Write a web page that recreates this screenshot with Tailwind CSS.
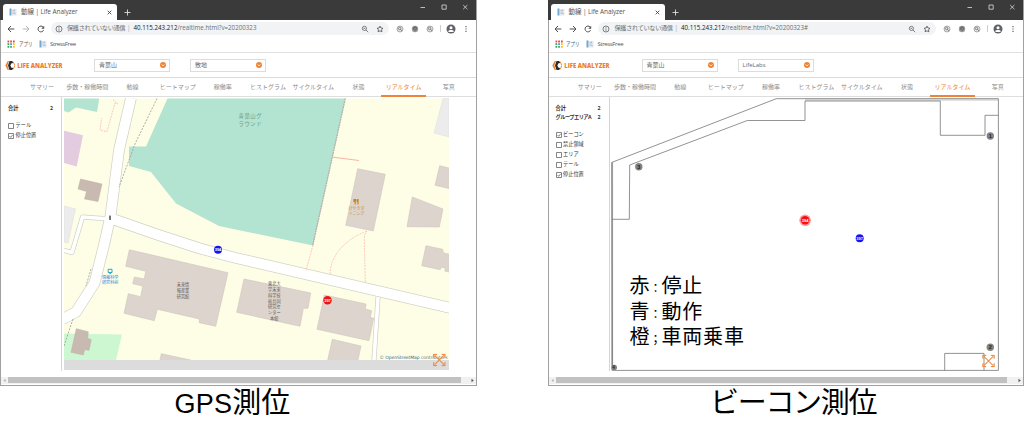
<!DOCTYPE html>
<html lang="ja">
<head>
<meta charset="utf-8">
<title>Life Analyzer</title>
<script src="https://cdn.jsdelivr.net/npm/@tailwindcss/browser@4"></script>
</head>
<body class="bg-white overflow-hidden font-['Open_Sans','Noto_Sans_CJK_JP',sans-serif]">
<svg class="hidden">
  <defs>
    <symbol id="favicon" viewBox="0 0 8 8"><rect x=".5" y=".5" width="2" height="7" fill="#6fa8cf"/><rect x="3" y="1" width="4.5" height="6.5" fill="#e3e8ee"/><path d="M3.5 2.5h2M3.5 4h2.5M3.5 5.5h3.5M5.5 1v2" stroke="#b3bfca" stroke-width=".7"/></symbol>
    <symbol id="apps" viewBox="0 0 8 8"><path d="M.5 1.5h1.7" stroke="#ea4335" stroke-width="1.8"/><path d="M3.2 1.5h1.7M6 1.5h1.7" stroke="#ea4335" stroke-width="1.8"/><path d="M.5 4.1h1.7" stroke="#34a853" stroke-width="1.8"/><path d="M3.2 4.1h1.7" stroke="#4285f4" stroke-width="1.8"/><path d="M6 4.1h1.7M6 6.8h1.7" stroke="#fbbc05" stroke-width="1.8"/><path d="M.5 6.8h1.7M3.2 6.8h1.7" stroke="#34a853" stroke-width="1.8"/></symbol>
    <symbol id="arrow" viewBox="0 0 8 8"><path d="M7.3 4H1.2M4 1L1 4l3 3" fill="none" stroke="currentColor" stroke-width="1"/></symbol>
    <symbol id="reload" viewBox="0 0 8 8"><path d="M6.6 5.2A2.9 2.9 0 1 1 6.2 2.1" fill="none" stroke="currentColor" stroke-width="1"/><path d="M7.2.8v2.9H4.3z" fill="currentColor"/></symbol>
    <symbol id="info" viewBox="0 0 8 8"><circle cx="4" cy="4" r="3" fill="none" stroke="#5f6368" stroke-width=".8"/><path d="M4 3.6v2.1M4 2.2v.8" stroke="#5f6368" stroke-width=".8"/></symbol>
    <symbol id="lens" viewBox="0 0 8 8"><circle cx="3.4" cy="3.4" r="2.1" fill="none" stroke="#5f6368" stroke-width=".8"/><path d="M5 5l2.200 2.200M2.500 3.400h1.800" stroke="#5f6368" stroke-width=".8"/></symbol>
    <symbol id="star" viewBox="0 0 8 8"><path d="M4 1.1l.9 1.9 2.1.3-1.5 1.4.4 2.1L4 5.8 2.1 6.8l.4-2.1L1 3.3 3.1 3z" fill="none" stroke="#4b4f54" stroke-width=".8"/></symbol>
    <symbol id="extlens" viewBox="0 0 8 8"><circle cx="4" cy="4" r="3" fill="#e4e4e4" stroke="#8d8d8d" stroke-width=".7"/><circle cx="3.6" cy="3.5" r="1.2" fill="none" stroke="#666" stroke-width=".7"/><path d="M4.4 4.3l1.6 1.6" stroke="#666" stroke-width=".8"/></symbol>
    <symbol id="extlock" viewBox="0 0 8 8"><circle cx="4" cy="4" r="3.2" fill="#9b9b9b"/><path d="M2.500 4.600V3.400a1.500 1.500 0 0 1 3 0v1.200M4 3.200v3" fill="none" stroke="#555" stroke-width=".9"/></symbol>
    <symbol id="user" viewBox="0 0 10 10"><circle cx="5" cy="5" r="4.500" fill="#5f6368"/><circle cx="5" cy="3.700" r="1.500" fill="#fff"/><path d="M2.100 7.200C3 5.700 7 5.700 7.900 7.200 7 8.400 3 8.400 2.100 7.200z" fill="#fff"/></symbol>
    <symbol id="logo" viewBox="0 0 10 11"><path d="M4 1.100H2.700L.3 5.500l2.400 4.400H4L2.400 5.500z" fill="#ee7f2d"/><path d="M4.500.9h2.600L8.400 3 6.500 3.300 5.300 5.500l1.200 2.200 1.900.3-1.300 2.100H4.500L3 5.500z" fill="#2a2a2c"/><path d="M8.100 1.600L9.900 5.500 8.100 9.400" fill="none" stroke="#ee7f2d" stroke-width=".9"/></symbol>
    <symbol id="drop" viewBox="0 0 8 8"><circle cx="4" cy="4" r="3" fill="#ee8433"/><path d="M2.500 3.500L4 4.900l1.500-1.400" fill="none" stroke="#fff" stroke-width=".8"/></symbol>
    <symbol id="expand" viewBox="0 0 14 14"><path d="M2 2l10 10M12 2L2 12" stroke="#f08c42" stroke-width="1.100"/><path d="M1 4.500V1h3.500M9.500 1H13v3.500M13 9.500V13H9.500M4.500 13H1V9.500" fill="none" stroke="#f08c42" stroke-width="1.300"/></symbol>
  </defs>
</svg>

<div class="flex h-[385.5px]">
  <section data-window="gps" class="w-[477px] shrink-0"></section>
  <div class="w-[70.5px] shrink-0"></div>
  <section data-window="beacon" class="w-[476.5px] shrink-0"></section>
</div>
<div class="flex text-[29px] leading-[34px] text-black font-['Liberation_Sans','Noto_Sans_CJK_JP',sans-serif]">
  <h2 class="ml-[174.500px] w-[535.500px] whitespace-nowrap"><span class="text-[27px] tracking-[0.200px]">GPS</span>測位</h2>
  <h2 class="whitespace-nowrap tracking-[-1.300px]">ビーコン測位</h2>
</div>

<template id="map-gps">
<svg class="absolute left-[2px] top-[1px] w-[385px] h-[272px]" viewBox="64 98 385 272" font-family="Noto Sans CJK JP, sans-serif">
  <rect x="64" y="98.500" width="385" height="262" fill="#fefee6"/>
  <path fill="#b3e3d1" d="M64 98.500H99.300L97 112 76 107.500 68.500 112.500 64 111zM167.500 98.500H345.300L313 245.500 219 226 176 203.500 151 172 129 166V146.500H146z"/>
  <path fill="#e3cbe0" d="M64 130.700L83 135.300 76.700 166.500 64 163z"/>
  <path fill="#ececec" stroke="#dcdcdc" stroke-width=".5" d="M64 206l11.500 3L68 243l-4-1zM443 98.500L434 133l15 4V98.500z"/>
  <path fill="#cdf7d0" d="M64 333.500l58 1L116 360H64z"/>
  <path fill="#c8bab1" stroke="#bcaea5" stroke-width=".5" d="M80.500 179L102 184 98 201.500 84.500 199 86.500 191.500 78 189zM76.300 328.700l12 3-.6 6.600 3.600 1.400L89 350.300l-4.300-.6L83.300 355 71 352.300z"/>
  <g fill="#ddd4ce" stroke="#cfc5be" stroke-width=".6">
    <path d="M357.700 168.700L385.300 174.300 373.300 231 345.700 225.300z"/>
    <path d="M449 168L439.700 165.700 435 185.300 449 188.500"/>
    <path d="M412.300 197L443 209 439.300 227 407 226.700z"/>
    <path d="M449 254.300L443.300 252.700 442.700 249.300 426 245.700 421.700 265.700 440.300 269.700 441 267.300 445.700 268.300 444.700 271 449 272"/>
    <path d="M129.300 249.700L228 272.700 215.700 326.300 199.300 322.700V319L157.300 309.300 154.300 320.700 124 313.300 128.300 293.700 140.700 296.700 142.700 286 132.700 283.700 134.300 277 144.300 279 145.700 271.300 125.700 266.300z"/>
    <path d="M244 279L310.700 293 308 308.300H303.300L300 326.300 236.700 312.300z"/>
    <path d="M324.300 295L366 304 365.300 309 371.700 310.700 370.300 317.300 373.700 318.300 369 340.700 317 329.300z"/>
    <path d="M327.700 360L332.300 339.300 361 346 358 360M160 360l1.300-6.300L190.700 360"/>
  </g>
  <g fill="none" stroke-linejoin="round">
    <g stroke="#d2d2c8">
      <path stroke-width="5" d="M110 219L82.500 217 72 252.500 64 250.500M378 297L374 360"/>
      <path stroke-width="11.500" d="M131 98L119 150 110.500 216 104 245 94.500 283 76 312 62 319.500M111 218.500L160 235.500 200 248.500 236 258 451 308"/>
    </g>
    <g stroke="#fff">
      <path stroke-width="3.600" d="M110 219L82.500 217 72 252.500 64 250.500M378 297L374 360"/>
      <path stroke-width="10" d="M131 98L119 150 110.500 216 104 245 94.500 283 76 312 62 319.500M111 218.500L160 235.500 200 248.500 236 258 451 308"/>
    </g>
    <path stroke="#b5b1aa" stroke-width="1.300" stroke-dasharray="2 .6" d="M345.300 98.500L312.800 245"/>
    <path stroke="#999" stroke-width=".8" stroke-dasharray="2 1.300" d="M157 98.500L135 144 119 187M91 269L86 286M73 319L64 346"/>
    <path stroke="#f8b3a6" stroke-width="1.200" d="M331.700 157L359 160.500"/>
    <path stroke="#f9bcae" stroke-width=".8" stroke-dasharray="2 .9" d="M113 99.700L118 104 115 103 107 131.700 100 130 101.700 118M313 245L306 270.700M367 231Q349 238 339.300 250T330.300 275M367 231Q364 234 364.300 240L365.300 283"/>
  </g>
  <rect x="109" y="215.500" width="2" height="4.500" rx=".6" fill="#777"/>
  <g fill="#6c9f8b" font-size="5.400" letter-spacing=".5"><text x="238.500" y="117.500">青葉山グ</text><text x="238.500" y="125.500">ラウンド</text></g>
  <path d="M354 199v2.500h1.200v3M358 199v5.500M354.600 199v2M355.600 199v2M357.300 199.200v3" stroke="#c98013" stroke-width="1.100" fill="none"/>
  <g fill="#cf8a2a" font-size="4"><text x="348.500" y="210">けやきダ</text><text x="348.500" y="215.300">イニング</text></g>
  <path d="M108.200 269.300h3.800v3.200h-3.800zM109.300 273.600h1.800" fill="none" stroke="#10a0c8" stroke-width=".9"/>
  <g fill="#2688e0" font-size="4.100"><text x="102" y="279">情報科学</text><text x="102" y="284.300">研究科前</text></g>
  <g fill="#5f5955" font-size="4.200" text-anchor="middle">
    <text x="183" y="286.300">未来情</text><text x="183" y="292.100">報産業</text><text x="183" y="297.800">研究館</text>
    <text x="274.300" y="285.300">東北大</text><text x="274.300" y="291">学未来</text><text x="274.300" y="296.800">科学技</text><text x="274.300" y="302.500">術共同</text><text x="274.300" y="308.300">研究セ</text><text x="274.300" y="314">ンター</text><text x="274.300" y="319.800">本館</text>
  </g>
  <g font-family="Liberation Sans, sans-serif" font-weight="bold" text-anchor="middle" font-size="4" fill="#fff">
    <circle cx="218" cy="249.800" r="4" fill="#1414f5"/><text x="218" y="251.300">394</text>
    <circle cx="327.500" cy="300.300" r="4.200" fill="#f51212"/><text x="327.500" y="301.800">397</text>
  </g>
  <text x="379.500" y="358.500" font-family="DejaVu Sans" font-size="4.500" fill="#6e7478" textLength="68">© <tspan fill="#2f6a94">OpenStreetMap</tspan> contributors</text>
  <rect x="64" y="360" width="385" height="10" fill="#dcdcdc"/>
  <use href="#expand" x="432.300" y="353.500" width="14" height="13"/>
</svg>
</template>

<template id="map-beacon">
<svg class="absolute left-[1.500px] top-0 w-[390px] h-[275px]" viewBox="611 97 390 275">
  <path d="M612 162.300V370.300" stroke="#b9b9b9" stroke-width="2.200"/>
  <path d="M805 99.800H998" stroke="#e0e0e0" stroke-width="2.500"/>
  <g fill="none" stroke="#777" stroke-width=".8">
    <path d="M612 162.300L776.300 98.700H998.400V370.400H612.500z"/>
    <path d="M612 219.300H629.300L629.700 165 747.300 120.500H805V101H940.300V135.300H985V115.300H998.400M944.700 370.400V353.400H984V370.400"/>
  </g>
  <g font-family="Liberation Sans, sans-serif" font-weight="bold" text-anchor="middle" font-size="5.500" fill="#222">
    <g fill="#828282"><circle cx="638.800" cy="166.800" r="3.700"/><circle cx="990.300" cy="136" r="3.700"/><circle cx="990.300" cy="347.300" r="3.700"/><circle cx="614.300" cy="367.500" r="2.700"/></g>
    <text x="638.800" y="168.800">3</text><text x="990.300" y="138">1</text><text x="990.300" y="349.300">2</text><text x="613.500" y="369" font-size="4.500">4</text>
  </g>
  <g font-family="Liberation Sans, sans-serif" font-weight="bold" text-anchor="middle" font-size="4" fill="#fff">
    <circle cx="805.100" cy="220.300" r="5.800" fill="#ff9c9c"/><circle cx="805.100" cy="220.300" r="4.300" fill="#f81010"/><text x="805.100" y="221.800">394</text>
    <circle cx="859.700" cy="238.200" r="4" fill="#1414f5"/><text x="859.700" y="239.700">397</text>
  </g>
  <g font-family="Noto Sans CJK JP, sans-serif" font-size="20" fill="#000">
    <text x="629.500" y="293">赤<tspan font-size="12">：</tspan><tspan letter-spacing=".8">停止</tspan></text>
    <text x="629.500" y="318.500">青<tspan font-size="12">：</tspan><tspan letter-spacing=".8">動作</tspan></text>
    <text x="629.500" y="344">橙<tspan font-size="12">；</tspan><tspan letter-spacing=".8">車両乗車</tspan></text>
  </g>
  <use href="#expand" x="981.500" y="354.500" width="14" height="13"/>
</svg>
</template>

<script>
const tabs = ['サマリー','歩数・稼働時間','動線','ヒートマップ','稼働率','ヒストグラム','サイクルタイム','状態','リアルタイム','写真'];
const views = {
  gps: { hash: '', forward: 'text-[#b4b6b8]', place: '敷地', cell: 'w-[45.200px]', thumb: 'w-[453px]',
         totals: [['合計', 2]], checks: [['テール', false], ['停止位置', true]] },
  beacon: { hash: '#', forward: 'text-[#4b4f54]', place: 'LifeLabs', cell: 'w-[45.350px]', thumb: 'w-[451.500px]',
         totals: [['合計', 2], ['グループエリアA', 2]],
         checks: [['ビーコン', true], ['禁止領域', false], ['エリア', false], ['テール', false], ['停止位置', true]] },
};
const icon = (id, cls) => `<svg class="${cls}"><use href="#${id}"/></svg>`;
const select = t => `<div class="flex items-center justify-between w-[76px] h-[13px] border border-[#dcdcdc] pl-[4px] pr-[2px] text-[6px] leading-none text-[#666]"><span>${t}</span>${icon('drop', 'w-[8px] h-[8px]')}</div>`;

for (const [name, v] of Object.entries(views)) {
  document.querySelector(`[data-window=${name}]`).innerHTML = `
  <div class="flex flex-col h-full border-l border-r border-b border-[#a0a0a0] bg-white">
    <div class="flex h-[20px] bg-[#3a3a3a] pl-[3px] -ml-px">
      <div class="flex items-center w-[114px] h-[16px] mt-[4px] rounded-t-[3px] bg-white pl-[6px] pr-[5px]">
        ${icon('favicon', 'w-[8px] h-[8px]')}
        <span class="ml-[4px] text-[6.500px] leading-none text-[#555] whitespace-nowrap tracking-[-0.100px]">動線 | Life Analyzer</span>
        <svg class="ml-auto w-[5px] h-[5px]" viewBox="0 0 5 5"><path d="M.7.7l3.600 3.600M4.300.7L.7 4.300" stroke="#444" stroke-width=".9"/></svg>
      </div>
      <svg class="ml-[7px] mt-[9px] w-[7px] h-[7px]" viewBox="0 0 7 7"><path d="M3.500.5v6M.5 3.500h6" stroke="#ddd" stroke-width=".9"/></svg>
      <svg class="ml-auto mr-[8.500px] mt-[4px] w-[48px] h-[6px]" viewBox="0 0 48 6"><path d="M.5 3.500H5M22 1h4.200v4.200H22zM43.200 1l4.200 4.200M47.400 1l-4.200 4.200" fill="none" stroke="#ddd" stroke-width=".8"/></svg>
    </div>
    <div class="flex items-center h-[17px] pl-[5.500px] text-[#4b4f54]">
      ${icon('arrow', 'w-[8px] h-[8px]')}
      <span class="flex ml-[7px] ${v.forward}">${icon('arrow', 'w-[8px] h-[8px] rotate-180')}</span>
      ${icon('reload', 'w-[8px] h-[8px] ml-[7px]')}
      <div class="flex items-center h-[13px] w-[338px] ml-[6px] rounded-full bg-[#f1f3f4] pl-[4px] pr-[5px] text-[6.200px] leading-none text-[#6b6f73] whitespace-nowrap">
        ${icon('info', 'w-[8px] h-[8px]')}
        <span class="ml-[4.500px] w-[58px] tracking-[-0.350px]">保護されていない通信</span>
        <span class="w-[8px] pl-[2px] text-[#aaa]">|</span>
        <span class="ml-[0.500px] tracking-[0.010px]"><span class="text-[#202124]">40.115.243.212</span>/realtime.html?v=20200323${v.hash}</span>
        ${icon('lens', 'w-[8px] h-[8px] ml-auto')}${icon('star', 'w-[8px] h-[8px] ml-[7px]')}
      </div>
      <div class="flex items-center ml-auto pr-[8px]">
        ${icon('extlens', 'w-[8px] h-[8px]')}${icon('extlock', 'w-[8px] h-[8px] ml-[7px]')}${icon('extlens', 'w-[8px] h-[8px] ml-[7px]')}
        <div class="w-px h-[7px] bg-[#ccc] ml-[6px]"></div>
        ${icon('user', 'w-[10px] h-[10px] ml-[5px]')}
        <svg class="ml-[8px] w-[4px] h-[8px]" viewBox="0 0 4 8"><path d="M2 1v1.200M2 3.400v1.200M2 5.800V7" stroke="#5f6368" stroke-width="1.200"/></svg>
      </div>
    </div>
    <div class="flex items-center h-[16px] border-b border-[#e0e0e0] pl-[6px] pb-px text-[6px] leading-none text-[#555]">
      ${icon('apps', 'w-[8px] h-[8px]')}<span class="ml-[3.500px] w-[20px]"><span class="inline-block origin-left scale-x-75 whitespace-nowrap">アプリ</span></span>${icon('favicon', 'w-[8px] h-[8px]')}<span class="ml-[3.500px] tracking-[-0.350px]">StressFree</span>
    </div>
    <div class="flex items-center h-[25px] border-b border-[#dadada] pl-[3.500px]">
      ${icon('logo', 'w-[10px] h-[11px]')}
      <svg class="ml-[2px] w-[47px] h-[12px] overflow-visible" viewBox="0 0 47 12"><text x=".3" y="8.700" font-family="Open Sans" font-weight="800" font-size="7.300" fill="#ee7f2d" textLength="45.200" lengthAdjust="spacingAndGlyphs">LIFE ANALYZER</text></svg>
      <div class="flex gap-[20px] ml-[30.500px]">${select('青葉山')}${select(v.place)}</div>
    </div>
    <nav class="flex h-[19px] border-b border-[#dedede] pl-[18.500px] text-[6px] leading-none text-[#8c8c8c]">
      ${tabs.map((t, i) => i === 8
        ? `<div class="flex items-center justify-center ${v.cell} h-[19px] -mb-px pt-px border-b-2 border-[#ee8438] text-[#ee7f2d] whitespace-nowrap">${t}</div>`
        : `<div class="flex items-center justify-center ${v.cell} whitespace-nowrap">${t}</div>`).join('')}
    </nav>
    <div class="flex h-[274px]">
      <aside class="w-[61px] border-r border-[#d5d5d5] pt-[7px] pl-[7px] text-[5.200px] leading-none text-[#333]">
        ${v.totals.map(([k, n]) => `<div class="flex items-center justify-between h-[9px] pr-[8px] font-bold whitespace-nowrap"><span class="${k.length > 4 ? 'tracking-[-0.500px]' : ''}">${k}</span><span>${n}</span></div>`).join('')}
        <div class="h-[8px]"></div>
        ${v.checks.map(([k, on]) => `<div class="flex items-center h-[9.900px] gap-[1.500px] whitespace-nowrap"><svg class="w-[6px] h-[6px]" viewBox="0 0 6 6"><path d="M.5.5h5v5h-5z${on ? 'M1.500 3l1.200 1.300L4.700 1.800' : ''}" fill="none" stroke="#666" stroke-width=".8"/></svg><span>${k}</span></div>`).join('')}
      </aside>
      <div class="relative flex-1">${document.getElementById('map-' + name).innerHTML}</div>
    </div>
    <div class="flex items-center h-[7px] mt-auto mb-px bg-[#f1f1f1]">
      <svg class="w-[7px] h-[7px]" viewBox="0 0 7 7"><path d="M4.500 2v3L2.500 3.500z" fill="#aaa"/></svg>
      <div class="${v.thumb} h-[6px] bg-[#c1c1c1]"></div>
      <svg class="ml-auto w-[13px] h-[7px]" viewBox="0 0 13 7"><path d="M8.500 1.800v3.400L10.800 3.500z" fill="#555"/></svg>
    </div>
  </div>`;
}
</script>
</body>
</html>
